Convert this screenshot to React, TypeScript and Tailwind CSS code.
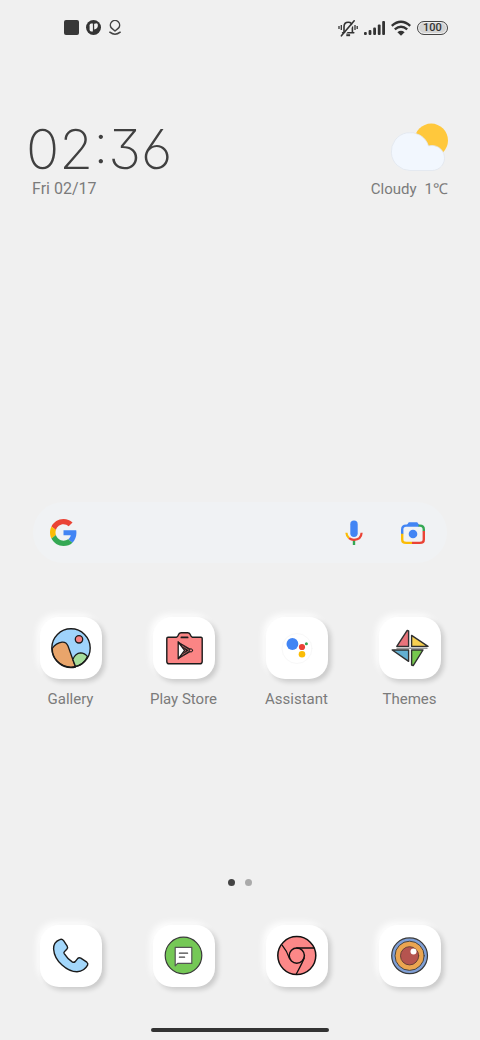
import type { ReactNode } from 'react'

type AppIconProps = {
  name: string
  showLabel?: boolean
  children: ReactNode
}

function AppIcon({ name, showLabel = false, children }: AppIconProps) {
  return (
    <button type="button" aria-label={name} className="flex flex-col items-center gap-2.5">
      <span className="block size-[62px] rounded-[19px] bg-white shadow-[3px_3px_5px_rgba(0,0,0,0.16),-3px_-3px_6px_rgba(255,255,255,0.9)]">
        <svg viewBox="0 0 62 62" className="size-full" strokeLinejoin="round" strokeLinecap="round">
          {children}
        </svg>
      </span>
      {showLabel && <span className="text-[15px] leading-5 text-[#7b7b7b]">{name}</span>}
    </button>
  )
}

function StatusBar() {
  return (
    <div className="flex h-[55px] items-center justify-between pr-8 pl-16 text-[#333]">
      <div className="flex items-center gap-[7px]">
        <svg viewBox="0 0 15 15" className="size-[15px]">
          <rect width="15" height="15" rx="2" fill="#383838" />
        </svg>
        <svg viewBox="0 0 15 15" className="size-[15px]">
          <circle cx="7.5" cy="7.5" r="7.5" fill="#333" />
          <path d="M6.9 3.6v7.9H5.2Q3.6 11.5 3.6 9.8V5.3Q3.6 3.6 5.2 3.6z" fill="#f0f0f0" />
          <path d="M8.2 3.6v5.8q3.4-.2 3.6-3.6z" fill="#f0f0f0" />
          <circle cx="10.2" cy="5" r="1.7" fill="#f0f0f0" />
        </svg>
        <svg viewBox="0 0 14 15" className="h-[15px] w-[14px]" fill="none" stroke="#444" strokeWidth="1.5">
          <path d="M7 11 3.6 8.2a4.6 4.6 0 1 1 6.8 0z" strokeLinejoin="round" />
          <path d="M1.8 12.2q5.2 4 10.4 0" strokeLinecap="round" />
        </svg>
      </div>
      <div className="flex items-center gap-1.5">
        <svg viewBox="0 0 20 18" className="h-[18px] w-5" fill="none" stroke="currentColor" strokeWidth="1.6">
          <path d="M4.6 13.7h11.2M6 13V8q0-4.8 4.2-4.8T14.4 8v5" strokeLinecap="round" />
          <path d="M8.3 16.2h3.8" strokeWidth="2" />
          <path d="M3.3 6v5M1 7v3M17 6v5M19.2 7v3" strokeWidth="1.3" />
          <path d="M4.7 17.5 17.4 3" stroke="#f0f0f0" strokeWidth="1.5" />
          <path d="M3.4 16.8 16.2 1.8" strokeLinecap="round" />
        </svg>
        <svg viewBox="0 0 21 14" className="h-3.5 w-[21px]" fill="currentColor">
          <rect x="0" y="11" width="2.8" height="3" rx="1" />
          <rect x="4.6" y="9" width="2.8" height="5" rx="1" />
          <rect x="9.2" y="6.5" width="2.8" height="7.5" rx="1" />
          <rect x="13.8" y="3.5" width="2.8" height="10.5" rx="1" />
          <rect x="18.2" y="0" width="2.8" height="14" rx="1" />
        </svg>
        <svg viewBox="0 0 20 16" className="h-4 w-5" fill="none" stroke="currentColor" strokeWidth="2.4">
          <path d="M.8 5.8q9.2-8.2 18.4 0" />
          <path d="M3.8 9.4q6.2-5.4 12.4 0" />
          <path d="M6.4 12.2q3.6-2.8 7.2 0L10 15.8z" fill="currentColor" stroke="none" />
        </svg>
        <span className="flex h-3.5 w-[31px] items-center justify-center rounded-full border border-[#444] bg-[#d4d4d4] text-[11px] leading-none font-medium ring-1 ring-[#f0f0f0] ring-inset">
          100
        </span>
      </div>
    </div>
  )
}

function Weather() {
  return (
    <div className="flex flex-col items-end">
      <svg viewBox="0 0 60 52" className="h-[52px] w-[60px]">
        <circle cx="43.2" cy="19.4" r="16.8" fill="#ffc83c" />
        <path
          d="M22 49.5A19 19 0 1 1 40.5 25 12.5 12.5 0 1 1 44 49.5z"
          fill="#f2f7fe"
          stroke="#e1e6ee"
          strokeWidth=".8"
        />
      </svg>
      <p className="mt-1.5 text-[15px] leading-5 text-[#7b7b7b]">
        Cloudy<span className="ml-2">1℃</span>
      </p>
    </div>
  )
}

function SearchBar() {
  return (
    <form className="mx-[33px] flex h-[61px] items-center rounded-full bg-[#f0f2f4] pr-[21px] pl-[17px]">
      <svg viewBox="0 0 48 48" className="size-[27px] shrink-0">
        <path fill="#EA4335" d="M24 9.5c3.54 0 6.71 1.22 9.21 3.6l6.85-6.85C35.9 2.38 30.47 0 24 0 14.62 0 6.51 5.38 2.56 13.22l7.98 6.19C12.43 13.72 17.74 9.5 24 9.5z" />
        <path fill="#4285F4" d="M46.98 24.55c0-1.57-.15-3.09-.38-4.55H24v9.02h12.94c-.58 2.96-2.26 5.48-4.78 7.18l7.73 6c4.51-4.18 7.09-10.36 7.09-17.65z" />
        <path fill="#FBBC05" d="M10.53 28.59c-.48-1.45-.76-2.99-.76-4.59s.27-3.14.76-4.59l-7.98-6.19C.92 16.46 0 20.12 0 24c0 3.88.92 7.54 2.56 10.78l7.97-6.19z" />
        <path fill="#34A853" d="M24 48c6.48 0 11.93-2.13 15.89-5.81l-7.73-6c-2.15 1.45-4.92 2.3-8.16 2.3-6.26 0-11.57-4.22-13.47-9.91l-7.98 6.19C6.51 42.62 14.62 48 24 48z" />
      </svg>
      <input type="search" aria-label="Search" className="h-full min-w-0 flex-1 bg-transparent px-3 outline-none" />
      <button type="button" aria-label="Voice search">
        <svg viewBox="0 0 18 26" className="h-[26px] w-[18px]" fill="none" strokeWidth="2.2">
          <rect x="5.3" y="0.5" width="7.4" height="16.5" rx="3.7" fill="#4285F4" />
          <path d="M9 20v5" stroke="#34A853" strokeWidth="2.4" />
          <path d="M1.4 12.8q.2 3.4 2.6 5.4" stroke="#FBBC05" />
          <path d="M4 18.2q2.2 1.7 5 1.7 7.2-.2 7.6-7.1" stroke="#EA4335" />
        </svg>
      </button>
      <button type="button" aria-label="Google Lens" className="ml-[37px]">
        <svg viewBox="0 0 26 24" className="h-6 w-[26px]" fill="none" strokeWidth="2.4">
          <path d="M6.5 4.6 8.8 1.2h8.4l2.3 3.4z" fill="#4285F4" />
          <path d="M2.2 13V8.5q0-3.9 3.9-3.9H19" stroke="#4285F4" />
          <path d="M18.5 4.6h1.4q3.9 0 3.9 3.9v1.7" stroke="#34A853" />
          <path d="M23.8 10v8.5q0 3.4-3.9 3.4H12" stroke="#EA4335" />
          <path d="M2.2 12.8v5.7q0 3.4 3.9 3.4H12" stroke="#FBBC05" />
          <circle cx="13" cy="13" r="4.3" fill="#4285F4" />
        </svg>
      </button>
    </form>
  )
}

export default function App() {
  return (
    <main className="flex min-h-screen flex-col bg-[#f0f0f0] pb-2 font-[Roboto,sans-serif]">
      <StatusBar />

      <header className="mt-16 flex items-end justify-between pr-8 pl-[26px]">
        <div>
          <time className="block text-[55px] leading-[60px] font-extralight text-[#404040] [font-family:Inter,sans-serif] [font-feature-settings:'cv03','cv09']">
            02:36
          </time>
          <p className="pl-1.5 text-base leading-5 text-[#7b7b7b]">Fri 02/17</p>
        </div>
        <Weather />
      </header>

      <div className="min-h-10 flex-1" />

      <SearchBar />

      <div className="mt-[54px] grid grid-cols-4 px-3.5">
        <AppIcon name="Gallery" showLabel>
          <circle cx="31" cy="31" r="19" fill="#9fd3fb" />
          <path d="M12.2 31.5Q16 26 22 25.2q4.2-.4 6 3.8l7.5 21A19 19 0 0 1 12.2 31.5z" fill="#e9a56b" stroke="#1b1b1b" strokeWidth="1.3" />
          <path d="M32.8 42.5q2.6-6.5 7.7-6.7 4.2 0 7 3.8-4 8.5-12 10z" fill="#a5dd9b" stroke="#1b1b1b" strokeWidth="1.3" />
          <circle cx="39" cy="22.3" r="3.7" fill="#f98181" stroke="#1b1b1b" strokeWidth="1.3" />
          <circle cx="31" cy="31" r="19.2" fill="none" stroke="#1b1b1b" strokeWidth="1.4" />
        </AppIcon>
        <AppIcon name="Play Store" showLabel>
          <path
            d="M15 20.2h8.6q1-.4 1.6-2 .8-2.4 2.8-2.4h6.8q2 0 2.8 2.4.6 1.6 1.6 2H48q1.2 0 1.2 1.2v23q0 2.4-2.4 2.4H16.2q-2.4 0-2.4-2.4v-23q0-1.2 1.2-1.2z"
            fill="#fb8585"
            stroke="#1b1b1b"
            strokeWidth="1.4"
          />
          <path d="M28.4 20.4h6.2" stroke="#1b1b1b" strokeWidth="1.8" />
          <path d="M25.2 25v16.8l6.4-8.4z" fill="#fff" stroke="#1b1b1b" strokeWidth="1.3" />
          <path d="M25.2 25 39.5 33.4 25.2 41.8l8-8.4z" fill="#1b1b1b" stroke="#1b1b1b" strokeWidth=".8" />
          <path d="m29.2 28.8 6.8 4.4M29.2 38l6.8-4.4" stroke="#fb8585" strokeWidth=".6" />
          <circle cx="38" cy="33.4" r="1.6" fill="#fb8585" stroke="#1b1b1b" />
        </AppIcon>
        <AppIcon name="Assistant" showLabel>
          <circle cx="31" cy="31.5" r="15" fill="#fff" stroke="#f8f8f8" />
          <circle cx="26.4" cy="27" r="5.9" fill="#4285F4" />
          <circle cx="36" cy="30" r="3.1" fill="#EA4335" />
          <circle cx="36" cy="37.3" r="3.3" fill="#FBBC05" />
          <circle cx="40.4" cy="26.7" r="1.5" fill="#34A853" />
        </AppIcon>
        <AppIcon name="Themes" showLabel>
          <path d="M18 31.2h30" stroke="#999" strokeWidth="1.4" />
          <g stroke="#303030" strokeWidth="1.4">
            <path d="M28.2 13.4 17.8 29.4h11.8V14z" fill="#e8747b" />
            <path d="M32.6 18.4v11h16.4z" fill="#f8d051" />
            <path d="M13.2 33h16.4v11.3z" fill="#63b0d3" />
            <path d="M32.6 33H44L34.2 48.6l-1.6-.6z" fill="#76c84d" />
          </g>
        </AppIcon>
      </div>

      <div className="mt-[170px] flex justify-center gap-2.5">
        <span className="size-[7px] rounded-full bg-[#444]" />
        <span className="size-[7px] rounded-full bg-[#aaa]" />
      </div>

      <nav className="mt-[39px] grid grid-cols-4 px-3.5">
        <AppIcon name="Phone">
          <path
            d="M19.8 14.6q-6.4 2.4-6.2 9.4.6 9.2 8.4 16 7.6 6.8 15 6.8 7.4-.6 10.6-6.6.8-1.8-.8-3l-6-4q-1.8-1-3.2.4l-2.4 3q-1.4 1.2-3 .2-5-3.4-8-8.2-.8-1.4.6-2.4l2-2q1.4-1.2.4-3l-3.6-5.6q-1.6-2-3.8-1z"
            fill="#a3d7fb"
            stroke="#1b1b1b"
            strokeWidth="1.4"
          />
        </AppIcon>
        <AppIcon name="Messages">
          <circle cx="30.5" cy="30.5" r="18.3" fill="#75c856" stroke="#3a3a3a" strokeWidth="1.2" />
          <path d="M22.2 22.4h16.6v16H24.6l-2.4 2.4z" fill="#fff" stroke="#555" strokeWidth="1.2" />
          <path d="M26.4 28.2h8.2M26.4 32.2h5.2" stroke="#444" strokeWidth="1.2" />
        </AppIcon>
        <AppIcon name="Chrome">
          <circle cx="30.8" cy="30.6" r="19" fill="#fc8888" stroke="#111" strokeWidth="1.5" />
          <circle cx="30.8" cy="30.6" r="7.6" fill="none" stroke="#111" strokeWidth="1.5" />
          <path d="M30.8 23h17M16.3 20.4q5 6 7.2 13.2M38.1 33q-.8 3-7.8 16" fill="none" stroke="#111" strokeWidth="1.3" />
        </AppIcon>
        <AppIcon name="Camera">
          <circle cx="30.6" cy="30.8" r="17.9" fill="#7f9fd6" stroke="#3a3a3a" strokeWidth="1.2" />
          <circle cx="30.6" cy="30.8" r="14.6" fill="#eba550" stroke="#444" strokeWidth="1" />
          <circle cx="30.6" cy="30.8" r="9.1" fill="#b5544f" stroke="#6a4038" strokeWidth="1" />
          <circle cx="34.5" cy="26.5" r="3" fill="#fff" />
        </AppIcon>
      </nav>

      <div className="mx-auto mt-[41px] h-1 w-[37%] rounded-full bg-[#333]" />
    </main>
  )
}
